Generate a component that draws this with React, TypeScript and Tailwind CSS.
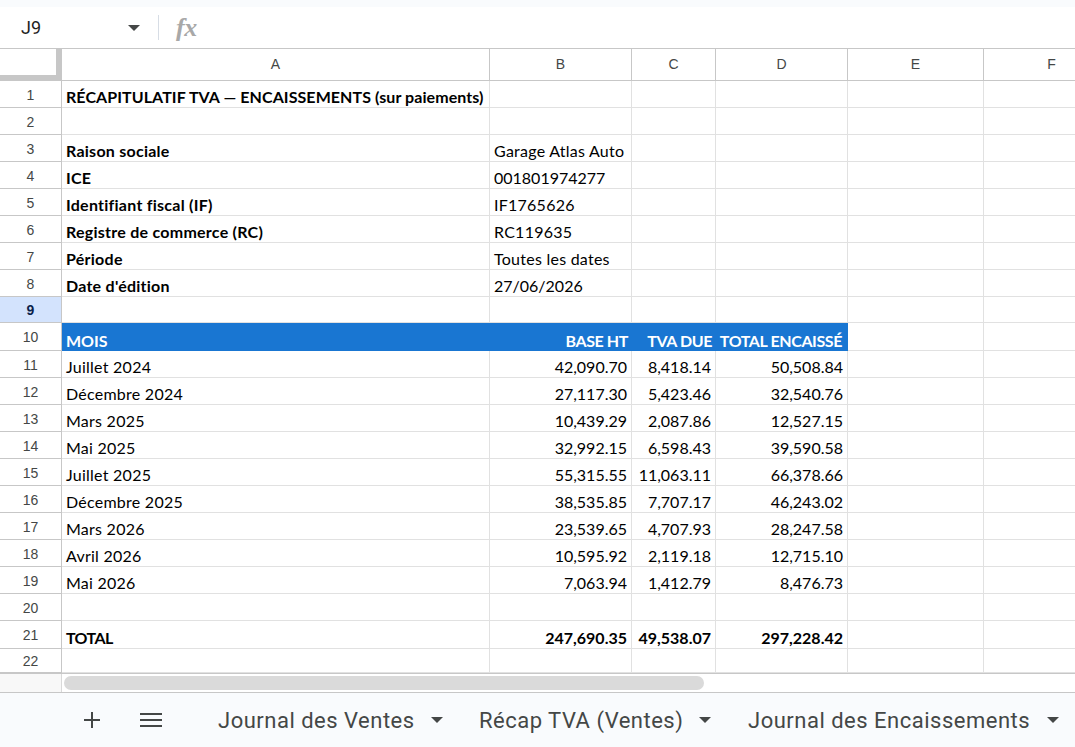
import React from 'react';
import clsx from 'clsx';

type Row = { h: string; cells?: string[]; kind?: 'label' | 'head' | 'total' | 'title' };

const rows: Row[] = [
  { h: 'h-[27px]', cells: ['RÉCAPITULATIF TVA — ENCAISSEMENTS (sur paiements)'], kind: 'title' },
  { h: 'h-[27px]' },
  { h: 'h-[27px]', cells: ['Raison sociale', 'Garage Atlas Auto'], kind: 'label' },
  { h: 'h-[27px]', cells: ['ICE', '001801974277'], kind: 'label' },
  { h: 'h-[27px]', cells: ['Identifiant fiscal (IF)', 'IF1765626'], kind: 'label' },
  { h: 'h-[27px]', cells: ['Registre de commerce (RC)', 'RC119635'], kind: 'label' },
  { h: 'h-[27px]', cells: ['Période', 'Toutes les dates'], kind: 'label' },
  { h: 'h-[27px]', cells: ['Date d\'édition', '27/06/2026'], kind: 'label' },
  { h: 'h-[26px]' },
  { h: 'h-[28px]', cells: ['MOIS', 'BASE HT', 'TVA DUE', 'TOTAL ENCAISSÉ'], kind: 'head' },
  { h: 'h-[27px]', cells: ['Juillet 2024', '42,090.70', '8,418.14', '50,508.84'] },
  { h: 'h-[27px]', cells: ['Décembre 2024', '27,117.30', '5,423.46', '32,540.76'] },
  { h: 'h-[27px]', cells: ['Mars 2025', '10,439.29', '2,087.86', '12,527.15'] },
  { h: 'h-[27px]', cells: ['Mai 2025', '32,992.15', '6,598.43', '39,590.58'] },
  { h: 'h-[27px]', cells: ['Juillet 2025', '55,315.55', '11,063.11', '66,378.66'] },
  { h: 'h-[27px]', cells: ['Décembre 2025', '38,535.85', '7,707.17', '46,243.02'] },
  { h: 'h-[27px]', cells: ['Mars 2026', '23,539.65', '4,707.93', '28,247.58'] },
  { h: 'h-[27px]', cells: ['Avril 2026', '10,595.92', '2,119.18', '12,715.10'] },
  { h: 'h-[27px]', cells: ['Mai 2026', '7,063.94', '1,412.79', '8,476.73'] },
  { h: 'h-[27px]' },
  { h: 'h-[28px]', cells: ['TOTAL', '247,690.35', '49,538.07', '297,228.42'], kind: 'total' },
  { h: 'h-[24px]' },
];

const colWidths = ['w-[428px]', 'w-[142px]', 'w-[84px]', 'w-[132px]', 'w-[136px]', 'w-[136px]'];
const colNames = ['A', 'B', 'C', 'D', 'E', 'F'];

const Caret = () => (
  <span className="inline-block w-0 h-0 border-x-[6px] border-x-transparent border-t-[6px] border-t-[#444746]" />
);

function cellTracking(row: Row, c: number, text?: string) {
  if (!text) return '';
  if (row.kind === 'head') return c === 0 ? '' : 'tracking-[-0.4px]';
  if (row.kind === 'title') return 'tracking-[0.08px]';
  if (row.kind === 'total') return c === 0 ? 'tracking-[-0.6px]' : '';
  if (/^[\d,./]+$/.test(text)) return '';
  return 'tracking-[0.25px]';
}

function SheetRow({ row, index }: { row: Row; index: number }) {
  const selected = index === 8;
  const isHead = row.kind === 'head';
  return (
    <div className={clsx('flex shrink-0', row.h)}>
      <div
        className={clsx(
          'w-[62px] shrink-0 flex items-center justify-center border-r border-b border-[#c7c7c7] text-[14px] font-["Liberation_Sans",sans-serif] pt-[2px]',
          selected ? 'bg-[#d3e3fd] font-bold text-[#0b1f4b]' : 'bg-white text-[#444746]'
        )}
      >
        {index + 1}
      </div>
      {colWidths.map((w, c) => {
        const text = row.cells?.[c];
        const blue = isHead && c < 4;
        const bold =
          isHead || row.kind === 'total' || row.kind === 'title' || (row.kind === 'label' && c === 0);
        return (
          <div
            key={c}
            className={clsx(
              w,
              'shrink-0 flex items-end pl-1 text-[16px] leading-[21px] whitespace-nowrap',
              isHead && c === 3 ? 'pr-[6px]' : 'pr-1',
              blue ? 'bg-[#1976d2] text-white' : 'border-b border-r border-[#e1e1e1] text-black',
              c > 0 && row.kind !== 'label' ? 'justify-end' : 'justify-start',
              bold && 'font-bold',
              cellTracking(row, c, text)
            )}
          >
            {text}
          </div>
        );
      })}
    </div>
  );
}

export default function App() {
  return (
    <div className="w-[1075px] h-[747px] overflow-hidden bg-white flex flex-col font-['Lato',sans-serif]">
      {/* barre de formule */}
      <div className="h-[7px] bg-[#f9fbfd] shrink-0" />
      <div className="h-[42px] flex items-center border-b border-[#c7c7c7] shrink-0">
        <div className="w-[128px] pl-[21px] text-[18px] text-[#1f1f1f] font-['Roboto',sans-serif]">J9</div>
        <Caret />
        <div className="w-px h-[25px] bg-[#d7dde5] ml-[18px]" />
        <span className="ml-[17px] text-[26px] leading-none italic font-bold text-[#a8a8a8] font-['Liberation_Serif',serif] tracking-[-0.5px]">fx</span>
      </div>

      {/* en-têtes de colonnes */}
      <div className="flex h-[32px] shrink-0">
        <div className="w-[62px] shrink-0 border-r border-b border-[#c7c7c7] flex">
          <div className="w-[56px] h-[26px] border-r-[5px] border-b-[5px] border-[#c7c7c7] box-content" />
        </div>
        {colWidths.map((w, i) => (
          <div
            key={i}
            className={clsx(
              w,
              'shrink-0 flex items-center justify-center border-r border-b border-[#c7c7c7] text-[14px] text-[#444746] font-["Liberation_Sans",sans-serif]'
            )}
          >
            {colNames[i]}
          </div>
        ))}
      </div>

      {rows.map((r, i) => (
        <SheetRow key={i} row={r} index={i} />
      ))}

      {/* barre de défilement */}
      <div className="h-[19px] flex border-t border-[#c7c7c7] shrink-0">
        <div className="w-[62px] bg-[#f8f8f8] border-r border-[#d9d9d9]" />
        <div className="flex-1 pl-[2px] pt-[2px]">
          <div className="w-[640px] h-[14px] rounded-full bg-[#dadada]" />
        </div>
      </div>

      {/* onglets */}
      <div className="flex-1 bg-[#f9fbfd] border-t border-[#c7c7c7] flex items-center font-['Roboto',sans-serif] text-[#444746] whitespace-nowrap">
        <svg className="ml-[84px]" width="16" height="16" viewBox="0 0 16 16" fill="none" stroke="#444746" strokeWidth="2">
          <path d="M8 0v16M0 8h16" />
        </svg>
        <svg className="ml-[40px]" width="22" height="16" viewBox="0 0 22 16" fill="none" stroke="#444746" strokeWidth="2">
          <path d="M0 2h22M0 8h22M0 14h22" />
        </svg>
        <span className="ml-[56px] text-[22px] tracking-[0.5px] w-[196px]">Journal des Ventes</span>
        <span className="ml-[17px] flex"><Caret /></span>
        <span className="ml-[36px] text-[22px] tracking-[0.5px] w-[203px]">Récap TVA (Ventes)</span>
        <span className="ml-[17px] flex"><Caret /></span>
        <span className="ml-[37px] text-[22px] tracking-[0.5px] w-[282px]">Journal des Encaissements</span>
        <span className="ml-[17px] flex"><Caret /></span>
      </div>
    </div>
  );
}
